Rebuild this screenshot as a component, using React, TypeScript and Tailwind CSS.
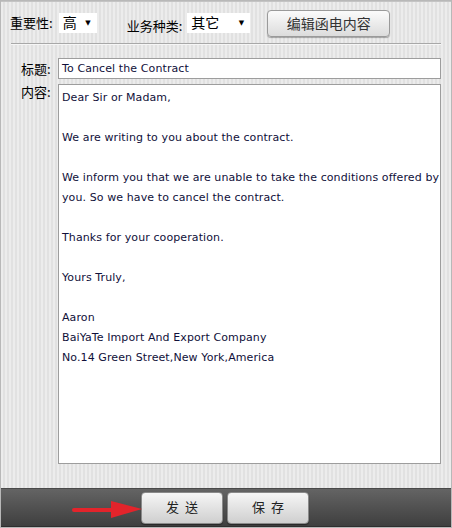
import React from "react";

const stripes =
  "bg-[repeating-linear-gradient(90deg,#ececec_0px,#ececec_2px,#e1e1e1_2px,#e1e1e1_4px)]";

const letter = [
  "Dear Sir or Madam,",
  "",
  "We are writing to you about the contract.",
  "",
  "We inform you that we are unable to take the conditions offered by",
  "you. So we have to cancel the contract.",
  "",
  "Thanks for your cooperation.",
  "",
  "Yours Truly,",
  "",
  "Aaron",
  "BaiYaTe Import And Export Company",
  "No.14 Green Street,New York,America",
];

function Select({ value, width }: { value: string; width: string }) {
  return (
    <div className={`${width} h-[20px] bg-white flex items-center justify-between pl-[4px] pr-[6px] text-[14px] text-black`}>
      <span>{value}</span>
      <span className="text-[7px] leading-none">▼</span>
    </div>
  );
}

function BarButton({ label }: { label: string }) {
  return (
    <button className="w-[82px] h-[32px] rounded-[4px] border border-[#8a8a8a] bg-gradient-to-b from-[#f6f6f6] to-[#cfcfcf] text-[13px] text-[#222] tracking-[6px] pl-[6px] shadow-[0_1px_1px_rgba(0,0,0,0.4)]">
      {label}
    </button>
  );
}

export default function App() {
  return (
    <div className="w-[452px] h-[528px] flex flex-col border border-[#b8b8b8] bg-[#f4f4f4] font-['DejaVu_Sans','Noto_Sans_CJK_SC',sans-serif]">
      <div className={`flex-1 flex flex-col ${stripes} border-t border-[#c4c4c4]`}>
        <div className="flex items-center h-[34px] pl-[9px] pt-[8px] text-[13px] text-black whitespace-nowrap">
          <span className="font-['Noto_Sans_CJK_SC',sans-serif]">重要性:</span>
          <div className="ml-[6px]">
            <Select value="高" width="w-[38px]" />
          </div>
          <span className="ml-[30px] mt-[6px] font-['Noto_Sans_CJK_SC',sans-serif]">业务种类:</span>
          <div className="ml-[5px]">
            <Select value="其它" width="w-[63px]" />
          </div>
          <button className="ml-[17px] w-[123px] h-[27px] rounded-[4px] border border-[#9a9a9a] bg-gradient-to-b from-[#fbfbfb] to-[#dcdcdc] text-[14px] text-[#333] shadow-[0_1px_1px_rgba(0,0,0,0.3)] font-['Noto_Sans_CJK_SC',sans-serif]">
            编辑函电内容
          </button>
        </div>
        <div className="mx-[10px] mt-[7px] h-[2px] border-t border-[#a8a8a8] border-b border-b-[#f6f6f6]" />
        <div className="flex items-center mt-[13px] pl-[20px] pr-[10px]">
          <span className="w-[37px] flex-none whitespace-nowrap text-[13px] text-black font-['Noto_Sans_CJK_SC',sans-serif]">标题:</span>
          <div className="flex-1 h-[21px] bg-white border border-[#9d9d9d] pl-[3px] text-[11px] tracking-[0.1px] leading-[19px] text-[#10103a]">
            To Cancel the Contract
          </div>
        </div>
        <div className="flex mt-[5px] pl-[20px] pr-[10px]">
          <span className="w-[37px] flex-none whitespace-nowrap text-[13px] leading-[16px] text-black font-['Noto_Sans_CJK_SC',sans-serif]">内容:</span>
          <div className="flex-1 h-[380px] bg-white border border-[#9d9d9d] pl-[3px] pt-[3px] text-[11px] tracking-[0.1px] leading-[20px] text-[#10103a]">
            {letter.map((line, i) => (
              <div key={i} className="h-[20px] whitespace-nowrap">
                {line}
              </div>
            ))}
          </div>
        </div>
      </div>
      <div className="h-[39px] bg-gradient-to-b from-[#646464] to-[#3f3f3f] border-t border-[#4a4a4a] border-b border-b-[#2e2e2e] flex items-center relative">
        <svg className="absolute left-[70px] top-[10px]" width="72" height="20" viewBox="0 0 72 20">
          <line x1="3" y1="11" x2="44" y2="11" stroke="#e3242b" strokeWidth="4" strokeLinecap="round" />
          <polygon points="40,2 71,10 40,19" fill="#e3242b" />
        </svg>
        <div className="ml-[140px] flex gap-[4px]">
          <BarButton label="发送" />
          <BarButton label="保存" />
        </div>
      </div>
    </div>
  );
}
